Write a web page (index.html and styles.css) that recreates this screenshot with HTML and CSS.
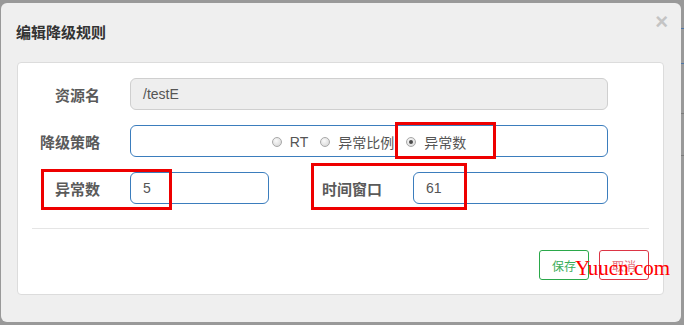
FILE: index.html
```html
<!DOCTYPE html>
<html lang="zh-CN">
<head>
<meta charset="utf-8">
<title>编辑降级规则</title>
<link rel="stylesheet" href="styles.css">
</head>
<body>
<div class="modal">
  <div class="modal-header">
    <h4 class="modal-title">编辑降级规则</h4>
    <span class="close">×</span>
  </div>
  <div class="panel">
    <div class="row">
      <label class="label">资源名</label>
      <div class="input input-disabled input-wide">/testE</div>
    </div>
    <div class="row">
      <label class="label">降级策略</label>
      <div class="input input-active input-wide radios">
        <label class="radio-item"><input type="radio" name="s" class="radio"><span>RT</span></label>
        <label class="radio-item"><input type="radio" name="s" class="radio"><span>异常比例</span></label>
        <label class="radio-item"><input type="radio" name="s" class="radio" checked><span>异常数</span></label>
      </div>
    </div>
    <div class="row">
      <label class="label">异常数</label>
      <div class="input input-active input-small">5</div>
      <label class="label label-second">时间窗口</label>
      <div class="input input-active input-medium">61</div>
    </div>
    <div class="divider"></div>
    <div class="footer">
      <button class="btn btn-save">保存</button>
      <button class="btn btn-cancel">取消</button>
    </div>
  </div>
</div>
<div class="mark mark-strategy"></div>
<div class="mark mark-count"></div>
<div class="mark mark-window"></div>
<div class="watermark">Yuucn.com</div>
</body>
</html>
```
FILE: styles.css
```css
html, body {
  margin: 0;
  padding: 0;
}
body {
  width: 684px;
  height: 325px;
  overflow: hidden;
  position: relative;
  font-family: "Liberation Sans", "Noto Sans CJK SC", sans-serif;
  background:
    linear-gradient(#4d76a6, #4d76a6) no-repeat 681px 28px / 3px 1px,
    linear-gradient(#4d76a6, #4d76a6) no-repeat 681px 63px / 3px 1px,
    linear-gradient(#7a7a7a, #7a7a7a) no-repeat 681px 113px / 3px 1px,
    linear-gradient(#7a7a7a, #7a7a7a) no-repeat 681px 155px / 3px 1px,
    #999999;
}
.modal {
  box-sizing: border-box;
  margin: 3px 0 0 1px;
  width: 680px;
  height: 319px;
  background: #efefef;
  border-radius: 6px;
}
.modal-header {
  height: 59px;
  display: flex;
  justify-content: space-between;
  align-items: flex-start;
  padding: 0 13px 0 15px;
  box-sizing: border-box;
}
.modal-title {
  margin: 19px 0 0 0;
  font-family: "Noto Sans CJK SC", sans-serif;
  font-size: 15px;
  line-height: 20px;
  font-weight: 700;
  color: #333;
}
.close {
  margin-top: 6px;
  font-family: "Liberation Sans", sans-serif;
  font-size: 22px;
  line-height: 26px;
  font-weight: 700;
  color: #c4c4c4;
}
.panel {
  box-sizing: border-box;
  margin: 0 0 0 16px;
  width: 647px;
  height: 233px;
  background: #fff;
  border: 1px solid #dcdcdc;
  border-radius: 4px;
  padding-top: 15px;
}
.row {
  display: flex;
  align-items: center;
  height: 32px;
  margin-bottom: 15px;
}
.row:nth-child(3) {
  margin-bottom: 0;
}
.label {
  width: 82px;
  margin-right: 30px;
  text-align: right;
  font-family: "Noto Sans CJK SC", sans-serif;
  font-size: 15px;
  font-weight: 700;
  color: #5a5a5a;
}
.label-second {
  width: 113px;
  margin-right: 31px;
}
.input {
  box-sizing: border-box;
  height: 32px;
  border-radius: 6px;
  padding-left: 12px;
  display: flex;
  align-items: center;
  font-size: 14px;
  color: #555;
}
.input-disabled {
  background: #eeeeee;
  border: 1px solid #cfcfcf;
}
.input-active {
  background: #fff;
  border: 1px solid #3b7dbd;
}
.input-wide {
  width: 478px;
}
.input-small {
  width: 139px;
}
.input-medium {
  width: 195px;
}
.radios {
  justify-content: center;
  padding-left: 0;
  padding-top: 2px;
}
.radio-item {
  display: flex;
  align-items: center;
  margin-left: 12px;
  font-size: 14px;
  color: #555;
}
.radio-item:first-child {
  margin-left: 0;
}
.radio {
  appearance: none;
  -webkit-appearance: none;
  box-sizing: border-box;
  width: 10px;
  height: 10px;
  margin: 0 8px 0 0;
  border: 1px solid #a8a8a8;
  border-radius: 50%;
  background: radial-gradient(circle at 40% 35%, #fafafa 0%, #e2e2e2 60%, #cfcfcf 100%);
  position: relative;
}
.radio:checked::after {
  content: "";
  position: absolute;
  left: 2px;
  top: 2px;
  width: 4px;
  height: 4px;
  border-radius: 50%;
  background: #4a4a4a;
}
.divider {
  margin: 24px 14px 0 14px;
  height: 1px;
  background: #e5e5e5;
}
.footer {
  display: flex;
  justify-content: flex-end;
  gap: 10px;
  margin-top: 21px;
  padding-right: 14px;
}
.btn {
  box-sizing: border-box;
  width: 50px;
  height: 30px;
  padding: 0;
  background: #fff;
  border-radius: 3px;
  font-family: "Noto Sans CJK SC", sans-serif;
  font-size: 12px;
}
.btn-save {
  border: 1px solid #2aa84a;
  color: #3aad5a;
}
.btn-cancel {
  border: 1px solid #dc3545;
  color: #e5707c;
}
.mark {
  position: absolute;
  box-sizing: border-box;
  border: 3px solid #ee0000;
}
.mark-strategy {
  left: 395px;
  top: 122px;
  width: 101px;
  height: 37px;
}
.mark-count {
  left: 41px;
  top: 169px;
  width: 131px;
  height: 41px;
}
.mark-window {
  left: 311px;
  top: 163px;
  width: 156px;
  height: 47px;
}
.watermark {
  position: absolute;
  left: 575px;
  top: 256px;
  font-family: "Liberation Serif", serif;
  font-size: 21px;
  line-height: 24px;
  color: #ff0000;
}
```
